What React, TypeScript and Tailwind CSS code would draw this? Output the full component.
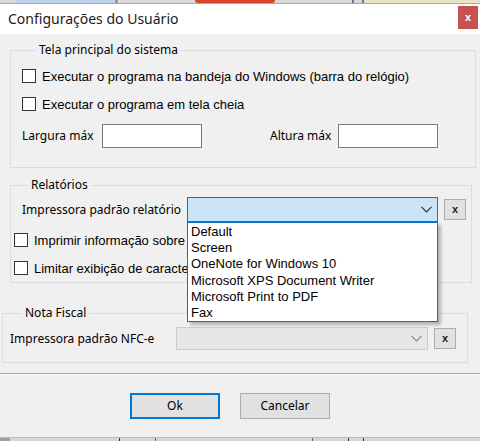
import React from "react";

const seg = { fontFamily: '"Noto Sans", "Open Sans", sans-serif' };
const ms = { fontFamily: '"Liberation Sans", Arial, sans-serif' };

function Check({ label, clip }: { label: string; clip?: boolean }) {
  return (
    <div className="flex items-center h-[14px]">
      <div className="w-[14px] h-[14px] border border-[#333333] bg-white shrink-0" />
      <span
        className={
          clip
            ? "ml-[6px] w-[153px] overflow-hidden text-[13px] leading-[15px] text-black whitespace-nowrap"
            : "ml-[6px] text-[13px] leading-[15px] text-black whitespace-nowrap"
        }
        style={ms}
      >
        {label}
      </span>
    </div>
  );
}

function XBtn() {
  return (
    <div className="w-[22px] h-[21px] border border-[#adadad] bg-[#e1e1e1] flex items-center justify-center text-[11px] font-bold text-[#222]" style={ms}>
      x
    </div>
  );
}

function Chevron({ color }: { color: string }) {
  return (
    <svg width="11" height="7" viewBox="0 0 11 7" className="shrink-0">
      <polyline points="0.5,0.8 5.5,5.8 10.5,0.8" fill="none" stroke={color} strokeWidth="1.2" />
    </svg>
  );
}

export default function App() {
  return (
    <div className="relative w-[480px] h-[441px] overflow-hidden bg-[#f0f0f0] text-black" style={seg}>
      {/* background app strip top */}
      <div className="flex h-[4px] bg-[#d9d9d9] border-b border-[#a8a8a8]">
        <div className="w-[15px]" />
        <div className="w-[100px] bg-[#bcd3ea]" />
        <div className="w-[3px] bg-[#9a9a9a]" />
        <div className="w-[77px]" />
        <div className="w-[80px] bg-[#d9452b] rounded-b-full" />
        <div className="w-[77px]" />
        <div className="w-[2px] bg-[#777]" />
        <div className="w-[8px]" />
        <div className="w-[2px] bg-[#777]" />
        <div className="flex-1 bg-[#e8e4c4]" />
      </div>

      {/* title bar */}
      <div className="h-[30px] bg-white flex items-center justify-between pl-[8px] pr-[2px]">
        <span className="text-[14px] leading-[20px] text-[#1a1a1a]" style={seg}>Configurações do Usuário</span>
        <div className="w-[20px] h-[23px] bg-[#c75050] flex items-center justify-center text-white text-[11px] font-bold mt-[-4px]" style={ms}>
          x
        </div>
      </div>

      {/* group 1 */}
      <fieldset className="mt-[8px] ml-[10px] w-[466px] border border-[#dcdcdc] pl-[11px] pt-[11px] pb-[19px]">
        <legend className="ml-[14px] px-[3px] text-[12px] leading-[16px]">Tela principal do sistema</legend>
        <Check label="Executar o programa na bandeja do Windows (barra do relógio)" />
        <div className="mt-[14px]">
          <Check label="Executar o programa em tela cheia" />
        </div>
        <div className="mt-[13px] flex items-center h-[24px]">
          <span className="text-[12px] w-[80px]">Largura máx</span>
          <div className="w-[100px] h-[24px] border border-[#7a7a7a] bg-white" />
          <span className="text-[12px] ml-[68px] w-[68px]">Altura máx</span>
          <div className="w-[100px] h-[24px] border border-[#7a7a7a] bg-white" />
        </div>
      </fieldset>

      {/* group 2 */}
      <fieldset className="mt-[9px] ml-[10px] w-[462px] border border-[#dcdcdc] pl-[3px] pt-[4px] pb-[7px]">
        <legend className="ml-[14px] px-[3px] text-[12px] leading-[16px]">Relatórios</legend>
        <div className="flex items-center h-[25px] ml-[8px]">
          <span className="text-[12px] w-[165px] whitespace-nowrap">Impressora padrão relatório</span>
          <div className="w-[251px] h-[25px] border border-[#0078d7] bg-[#cce4f7] flex items-center justify-end pr-[5px]">
            <Chevron color="#333" />
          </div>
          <div className="ml-[6px]">
            <XBtn />
          </div>
        </div>
        <div className="mt-[11px]">
          <Check clip label="Imprimir informação sobre o sistema" />
        </div>
        <div className="mt-[14px]">
          <Check clip label="Limitar exibição de caracteres" />
        </div>
      </fieldset>

      {/* group 3 */}
      <fieldset className="mt-[22px] ml-[2px] w-[466px] border border-[#dcdcdc] pl-[7px] pt-[6px] pb-[12px]">
        <legend className="ml-[12px] px-[3px] text-[12px] leading-[16px]">Nota Fiscal</legend>
        <div className="flex items-center h-[23px]">
          <span className="text-[12px] w-[166px] whitespace-nowrap">Impressora padrão NFC-e</span>
          <div className="w-[252px] h-[23px] border border-[#cccccc] bg-[#e6e6e6] flex items-center justify-end pr-[5px]">
            <Chevron color="#888" />
          </div>
          <div className="ml-[6px]">
            <XBtn />
          </div>
        </div>
      </fieldset>

      {/* separator */}
      <div className="mt-[10px] border-t border-[#a0a0a0] border-b border-b-white" />

      {/* buttons */}
      <div className="mt-[18px] flex pl-[130px] gap-[20px]">
        <div className="w-[90px] h-[26px] border-2 border-[#0078d7] bg-[#e1e1e1] flex items-center justify-center text-[12px]">Ok</div>
        <div className="w-[90px] h-[26px] border border-[#adadad] bg-[#e1e1e1] flex items-center justify-center text-[12px]">Cancelar</div>
      </div>

      {/* background app strip bottom */}
      <div className="absolute left-0 right-0 bottom-0 h-[4px] bg-[#d6d6d6] border-t border-[#bdbdbd] flex">
        <div className="w-[10px] bg-[#9aa0a6]" />
        <div className="w-[109px]" />
        <div className="w-[1px] bg-[#333]" />
        <div className="w-[35px]" />
        <div className="w-[1px] bg-[#666]" />
        <div className="w-[156px]" />
        <div className="w-[1px] bg-[#666]" />
        <div className="w-[35px]" />
        <div className="w-[1px] bg-[#333]" />
        <div className="w-[14px]" />
        <div className="w-[1px] bg-[#333]" />
      </div>

      {/* dropdown list overlay */}
      <div
        className="absolute left-[187px] top-[222px] w-[251px] h-[100px] bg-white border border-[#0078d7] shadow-[3px_3px_3px_rgba(0,0,0,0.25)] pl-[3px] pt-[1px] text-[13px] leading-[16.2px]"
        style={ms}
      >
        <div>Default</div>
        <div>Screen</div>
        <div>OneNote for Windows 10</div>
        <div>Microsoft XPS Document Writer</div>
        <div>Microsoft Print to PDF</div>
        <div>Fax</div>
      </div>
    </div>
  );
}
